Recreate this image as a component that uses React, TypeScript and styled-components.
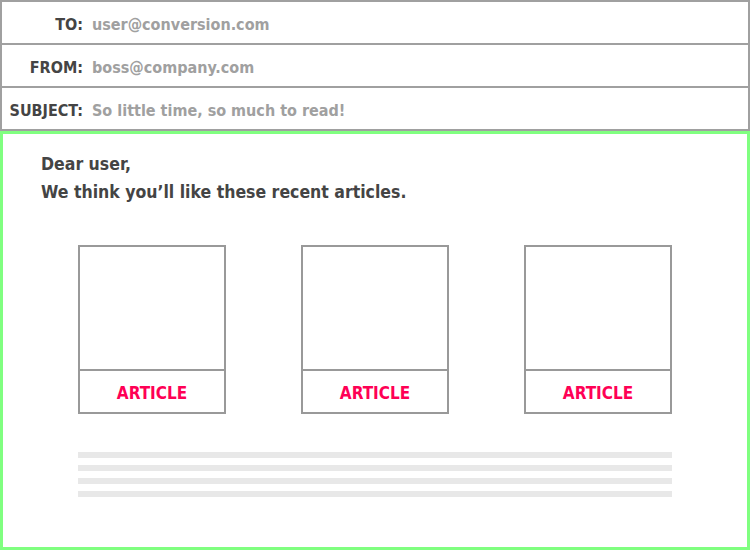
import React from 'react';
import styled, { createGlobalStyle } from 'styled-components';

const GlobalStyle = createGlobalStyle`
  html, body {
    margin: 0;
    padding: 0;
    background: #ffffff;
  }
  body {
    font-family: "DejaVu Sans Condensed", "Liberation Sans Narrow", "Liberation Sans", sans-serif;
  }
`;

const Page = styled.div`
  width: 750px;
  height: 550px;
  display: flex;
  flex-direction: column;
  box-sizing: border-box;
`;

const Header = styled.div`
  border-top: 2px solid #a0a0a0;
`;

const HeaderRow = styled.div`
  display: flex;
  align-items: center;
  height: 38px;
  padding-top: 3px;
  border: 2px solid #a0a0a0;
  border-top: none;
  box-sizing: content-box;
`;

const Label = styled.span`
  width: 81px;
  text-align: right;
  font-size: 16px;
  font-weight: bold;
  color: #444444;
`;

const Value = styled.span`
  margin-left: 9px;
  font-size: 16px;
  font-weight: bold;
  color: #a0a0a0;
`;

const Body = styled.div`
  flex: 1;
  border: 3px solid #80ff80;
  padding: 16px 0 0 38px;
  box-sizing: border-box;
`;

const Greeting = styled.p`
  margin: 0;
  font-size: 17.5px;
  font-weight: bold;
  line-height: 28px;
  color: #444444;
`;

const Cards = styled.div`
  display: flex;
  justify-content: space-between;
  width: 594px;
  margin: 39px 0 0 37px;
`;

const Card = styled.div`
  width: 148px;
  height: 169px;
  border: 2px solid #999999;
  box-sizing: border-box;
  display: flex;
  flex-direction: column;
`;

const Thumb = styled.div`
  height: 122px;
  border-bottom: 2px solid #999999;
`;

const CardLabel = styled.div`
  flex: 1;
  display: flex;
  align-items: center;
  justify-content: center;
  padding-top: 2px;
  font-size: 17px;
  font-weight: bold;
  color: #ff0055;
`;

const Lines = styled.div`
  display: flex;
  flex-direction: column;
  gap: 7px;
  width: 594px;
  margin: 38px 0 0 37px;
`;

const Line = styled.div`
  height: 6px;
  background: #e8e8e8;
`;

const fields = [
  { label: 'TO:', value: 'user@conversion.com' },
  { label: 'FROM:', value: 'boss@company.com' },
  { label: 'SUBJECT:', value: 'So little time, so much to read!' },
];

export default function App() {
  return (
    <>
      <GlobalStyle />
      <Page>
        <Header>
          {fields.map((f) => (
            <HeaderRow key={f.label}>
              <Label>{f.label}</Label>
              <Value>{f.value}</Value>
            </HeaderRow>
          ))}
        </Header>
        <Body>
          <Greeting>
            Dear user,
            <br />
            We think you’ll like these recent articles.
          </Greeting>
          <Cards>
            {[1, 2, 3].map((n) => (
              <Card key={n}>
                <Thumb />
                <CardLabel>ARTICLE</CardLabel>
              </Card>
            ))}
          </Cards>
          <Lines>
            {[1, 2, 3, 4].map((n) => (
              <Line key={n} />
            ))}
          </Lines>
        </Body>
      </Page>
    </>
  );
}
